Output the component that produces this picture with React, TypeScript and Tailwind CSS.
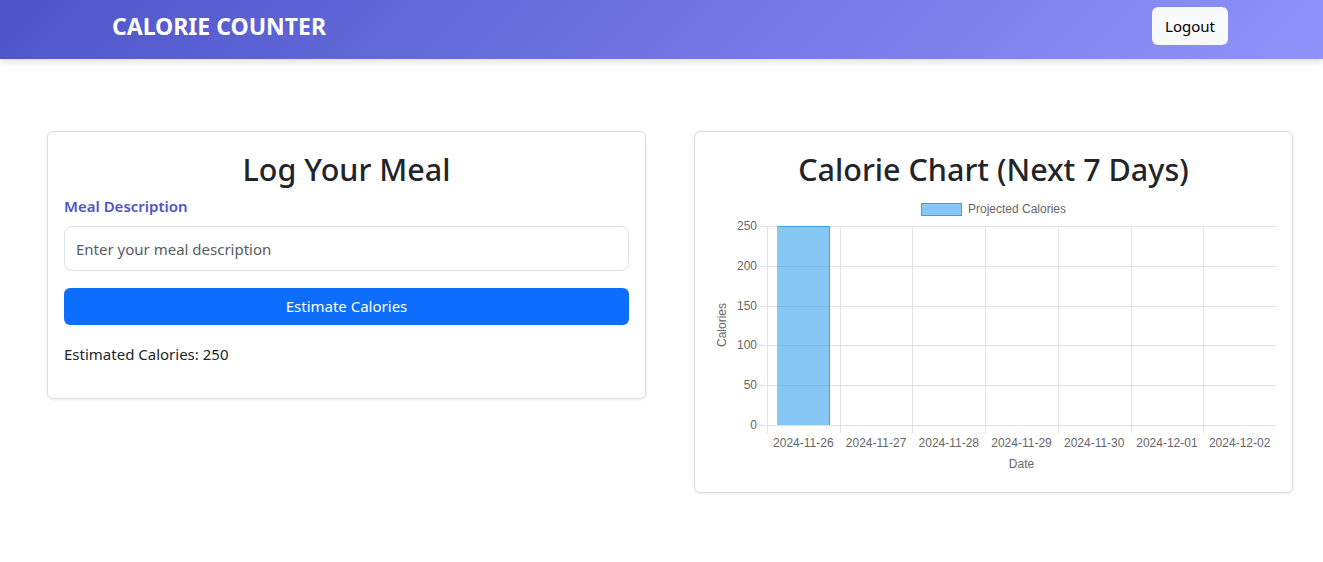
import React from "react";

const dates = ["2024-11-26", "2024-11-27", "2024-11-28", "2024-11-29", "2024-11-30", "2024-12-01", "2024-12-02"];

function Chart() {
  const left = 56;
  const right = 565;
  const top = 36;
  const bottom = 235;
  const colW = (right - left) / 7;
  const yVals = [0, 50, 100, 150, 200, 250];
  const yFor = (v: number) => bottom - (v / 250) * (bottom - top);
  return (
    <svg width="565" height="286" className="block" style={{ fontFamily: '"Liberation Sans", Arial, sans-serif' }}>
      <rect x="210.5" y="13.5" width="40" height="12" fill="rgba(54,162,235,0.6)" stroke="#36a2eb" strokeWidth="1" />
      <text x="257" y="23" fontSize="12" fill="#666">Projected Calories</text>
      {yVals.map((v) => (
        <g key={v}>
          <line x1={48} x2={right} y1={Math.round(yFor(v)) + 0.5} y2={Math.round(yFor(v)) + 0.5} stroke="#e4e4e4" strokeWidth="1" />
          <text x={46} y={Math.round(yFor(v)) + 4} fontSize="12" fill="#666" textAnchor="end">{v}</text>
        </g>
      ))}
      {Array.from({ length: 8 }).map((_, i) => {
        const x = Math.round(left + i * colW) + 0.5;
        return <line key={i} x1={x} x2={x} y1={top} y2={243} stroke="#e4e4e4" strokeWidth="1" />;
      })}
      <rect x={66} y={top} width={53} height={bottom - top} fill="rgba(54,162,235,0.6)" />
      <line x1={118.5} x2={118.5} y1={top} y2={bottom} stroke="#36a2eb" strokeWidth="1" />
      <line x1={66} x2={119} y1={top + 0.5} y2={top + 0.5} stroke="#36a2eb" strokeWidth="1" />
      {dates.map((d, i) => (
        <text key={d} x={left + colW * i + colW / 2} y={257} fontSize="12" fill="#666" textAnchor="middle">{d}</text>
      ))}
      <text x={(left + right) / 2} y={278} fontSize="12" fill="#666" textAnchor="middle">Date</text>
      <text x={0} y={0} fontSize="12" fill="#666" textAnchor="middle" transform="translate(15 135) rotate(-90)">Calories</text>
    </svg>
  );
}

export default function App() {
  return (
    <div className="min-h-[562px] bg-white text-[#212529]" style={{ fontFamily: '"Noto Sans", "Open Sans", sans-serif' }}>
      <header className="h-[59px] bg-[linear-gradient(135deg,#4e54c8,#8f94fb)] shadow-[0_4px_6px_rgba(0,0,0,0.1)] flex items-start justify-between pl-[112px] pr-[95px] pt-[7px]">
        <h1 className="h-[38px] flex items-center text-[23px] font-bold text-white leading-none">CALORIE COUNTER</h1>
        <button className="h-[38px] w-[76px] bg-[#f8f9fa] rounded-md text-[15px] text-black">Logout</button>
      </header>
      <main className="flex items-start gap-[48px] pl-[47px] pt-[72px]">
        <section className="w-[599px] border border-[#dcdcdc] rounded-md shadow-[0_1px_3px_rgba(0,0,0,0.08)] px-4 pt-[18px] pb-[32px]">
          <h2 className="text-[30.5px] font-medium text-center leading-[38px]">Log Your Meal</h2>
          <label className="block mt-[6px] text-[15px] leading-6 font-semibold text-[#4e54c8]">Meal Description</label>
          <input
            className="mt-2 block w-full h-[45px] border border-[#dee2e6] rounded-lg px-[11px] text-[15px] placeholder:text-[#595c5f] outline-none"
            placeholder="Enter your meal description"
          />
          <button className="mt-[17px] block w-full h-[37px] bg-[#0d6efd] text-white rounded-md text-[15px]">Estimate Calories</button>
          <p className="mt-[17px] text-[15px] leading-6">Estimated Calories: 250</p>
        </section>
        <section className="w-[599px] border border-[#dcdcdc] rounded-md shadow-[0_1px_3px_rgba(0,0,0,0.08)] px-4 pt-[18px] pb-4">
          <h2 className="text-[30.5px] font-medium text-center leading-[38px]">Calorie Chart (Next 7 Days)</h2>
          <div className="mt-[2px]">
            <Chart />
          </div>
        </section>
      </main>
    </div>
  );
}
